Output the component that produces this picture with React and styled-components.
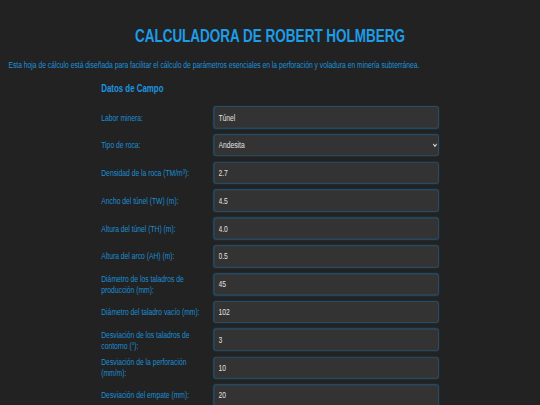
import React from "react";
import styled, { createGlobalStyle } from "styled-components";

const Global = createGlobalStyle`
  html, body {
    margin: 0;
    padding: 0;
    background: #222222;
    overflow: hidden;
  }
  body {
    font-family: "Liberation Sans", Arial, sans-serif;
  }
`;

/* The reference is a 1280x675 page squeezed into 540x405 */
const Viewport = styled.div`
  width: 1280px;
  transform: scale(0.421875, 0.6);
  transform-origin: 0 0;
`;

const Page = styled.div`
  padding: 20px;
  color: #1d9bf0;
  font-size: 16px;
`;

const Title = styled.h1`
  margin: 0.67em 0;
  font-size: 32px;
  font-weight: bold;
  text-align: center;
  color: #1d9ce8;
`;

const Intro = styled.p`
  margin: 16px 0;
  font-size: 16px;
  color: #1b93dc;
`;

const Form = styled.div`
  max-width: 800px;
  margin: 0 auto;
`;

const Section = styled.h3`
  margin: 1em 0;
  font-size: 18.72px;
  font-weight: bold;
  color: #1b96e0;
`;

const Row = styled.div`
  display: grid;
  grid-template-columns: 1fr 2fr;
  align-items: center;
  margin-bottom: 10px;
`;

const Label = styled.label`
  padding-right: 16px;
  font-size: 16px;
  line-height: 18px;
  color: #1a8fd6;
`;

const fieldBase = `
  box-sizing: border-box;
  width: 100%;
  height: 36.4px;
  padding: 8px 10px;
  font-family: "Liberation Sans", Arial, sans-serif;
  font-size: 16px;
  color: #e2e2e2;
  background: #333333;
  border: 1.5px solid #2b6489;
  border-radius: 5px;
  box-shadow: 0 0 3px rgba(29, 155, 240, 0.3);
  outline: none;
`;

const Input = styled.input`
  ${fieldBase}
`;

const Select = styled.select`
  ${fieldBase}
  padding: 6px 6px;
  color-scheme: dark;
`;

const rows = [
  ["Densidad de la roca (TM/m³):", "2.7"],
  ["Ancho del túnel (TW) (m):", "4.5"],
  ["Altura del túnel (TH) (m):", "4.0"],
  ["Altura del arco (AH) (m):", "0.5"],
  ["Diámetro de los taladros de producción (mm):", "45"],
  ["Diámetro del taladro vacío (mm):", "102"],
  ["Desviación de los taladros de contorno (°):", "3"],
  ["Desviación de la perforación (mm/m):", "10"],
  ["Desviación del empate (mm):", "20"],
];

export default function App() {
  return (
    <>
      <Global />
      <Viewport>
        <Page>
          <Title>CALCULADORA DE ROBERT HOLMBERG</Title>
          <Intro>
            Esta hoja de cálculo está diseñada para facilitar el cálculo de
            parámetros esenciales en la perforación y voladura en minería
            subterránea.
          </Intro>
          <Form>
            <Section>Datos de Campo</Section>
            <Row>
              <Label>Labor minera:</Label>
              <Input defaultValue="Túnel" />
            </Row>
            <Row>
              <Label>Tipo de roca:</Label>
              <Select defaultValue="Andesita">
                <option>Andesita</option>
                <option>Granito</option>
                <option>Basalto</option>
              </Select>
            </Row>
            {rows.map(([label, value]) => (
              <Row key={label}>
                <Label>{label}</Label>
                <Input defaultValue={value} />
              </Row>
            ))}
          </Form>
        </Page>
      </Viewport>
    </>
  );
}
